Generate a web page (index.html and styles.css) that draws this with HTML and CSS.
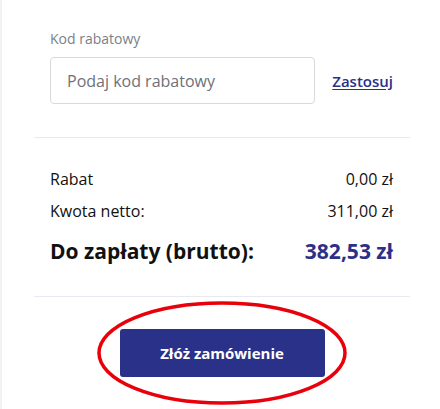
FILE: index.html
```html
<!DOCTYPE html>
<html lang="pl">
<head>
<meta charset="utf-8">
<link rel="stylesheet" href="styles.css">
</head>
<body>
<div class="card">
  <section class="coupon">
    <label class="coupon-label" for="code">Kod rabatowy</label>
    <div class="coupon-row">
      <input id="code" class="coupon-input" type="text" placeholder="Podaj kod rabatowy">
      <a class="coupon-apply" href="#">Zastosuj</a>
    </div>
  </section>
  <section class="totals">
    <div class="total-row"><span>Rabat</span><span>0,00 zł</span></div>
    <div class="total-row"><span>Kwota netto:</span><span>311,00 zł</span></div>
    <div class="total-row grand"><span>Do zapłaty (brutto):</span><span class="grand-value">382,53 zł</span></div>
  </section>
  <section class="submit">
    <div class="submit-wrap">
      <button class="submit-btn" type="button">Złóż zamówienie</button>
      <svg class="highlight" width="252" height="106" viewBox="0 0 252 106" aria-hidden="true">
        <ellipse cx="126" cy="53" rx="123" ry="50" fill="none" stroke="#e8000b" stroke-width="3.5"/>
      </svg>
    </div>
  </section>
</div>
</body>
</html>
```

FILE: styles.css
```css
* { box-sizing: border-box; }
html, body { margin: 0; padding: 0; }
body {
  background: #f3f3f4;
  font-family: "Open Sans", "DejaVu Sans", sans-serif;
  color: #111;
  width: 440px;
  height: 409px;
  overflow: hidden;
}
.card {
  margin-left: 2px;
  background: #fff;
  height: 409px;
  padding: 0 30px 0 32px;
}
.coupon {
  padding: 30px 17px 33px 16px;
  border-bottom: 1px solid #e9e9f2;
}
.coupon-label {
  display: block;
  font-size: 14px;
  line-height: 18px;
  color: #7b8089;
  margin-bottom: 9px;
}
.coupon-row {
  display: flex;
  align-items: center;
  gap: 17px;
}
.coupon-input {
  width: 266px;
  height: 47px;
  border: 1px solid #d9d9dc;
  border-radius: 4px;
  padding: 0 16px;
  font-family: inherit;
  font-size: 16px;
  color: #333;
  outline: none;
}
.coupon-input::placeholder { color: #6e7179; }
.coupon-apply {
  font-size: 15px;
  font-weight: 600;
  color: #2b3088;
  text-decoration: underline;
  text-underline-offset: 2px;
}
.totals {
  padding: 31px 17px 31px 16px;
  border-bottom: 1px solid #e9e9f2;
}
.total-row {
  display: flex;
  justify-content: space-between;
  font-size: 16px;
  line-height: 20px;
  margin-bottom: 12px;
}
.total-row.grand {
  font-size: 21px;
  font-weight: 700;
  line-height: 28px;
  margin-bottom: 0;
  margin-top: 16px;
}
.grand-value { color: #2b3088; }
.submit {
  display: flex;
  justify-content: center;
  padding-top: 3px;
}
.submit-wrap {
  position: relative;
  width: 252px;
  height: 106px;
  display: flex;
  align-items: center;
  justify-content: center;
}
.submit-btn {
  width: 205px;
  height: 48px;
  background: #2a3189;
  color: #fff;
  border: none;
  border-radius: 3px;
  font-family: inherit;
  font-size: 15px;
  font-weight: 700;
}
.highlight {
  position: absolute;
  left: 0;
  top: 0;
}
```
